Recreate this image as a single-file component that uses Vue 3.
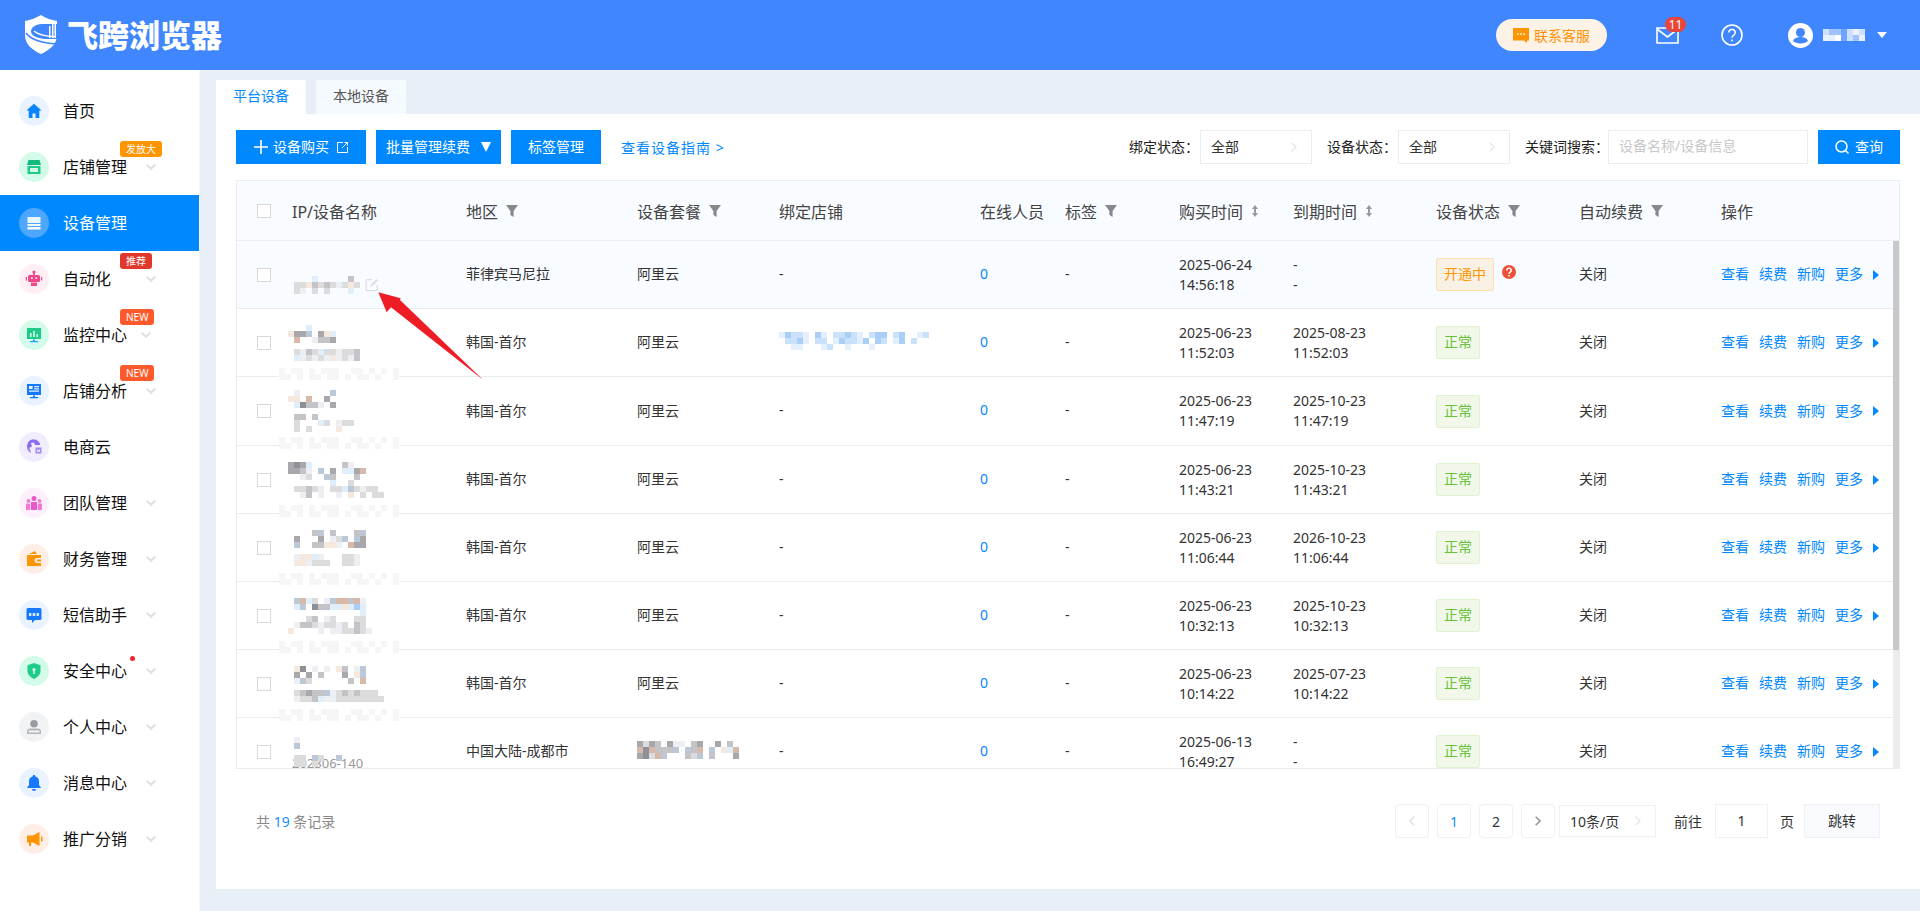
<script setup>
import { h } from 'vue'

// blurred patches in the screenshot: each char is one 6px mosaic cell
const palette = {
  a: '#a8a8ac', b: '#c4c4c8', c: '#dcdcdc', d: '#eeeff2', e: '#e0eefa', f: '#f5e9df',
  g: '#bcc8d8', h: '#8f8f96', p: '#d8b8a8', i: '#a9cff7', j: '#c9e1fb', k: '#e3effd',
  l: '#cfe0ff', m: '#9fc2ff', n: '#e9f1ff', o: '#6ea3ff', s: '#f6f6f7', w: '#ffffff',
}

const Mosaic = ({ rows, bg }) => {
  const cols = Math.max(...rows.map((r) => r.length))
  const cells = []
  if (bg) cells.push(h('rect', { width: cols * 6, height: rows.length * 6, fill: bg }))
  rows.forEach((row, y) => {
    ;[...row].forEach((ch, x) => {
      if (palette[ch]) cells.push(h('rect', { x: x * 6, y: y * 6, width: 6, height: 6, fill: palette[ch] }))
    })
  })
  return h('svg', { width: cols * 6, height: rows.length * 6, style: 'display:block;flex:none' }, cells)
}

const userMosaic = ['lmmolnl.', 'nkwolmn.']
const smudge = ['s.ss.s.sss..ss.s.s.s', 'ss.s.ss.ss.s.ss.s..s']

const menu = [
  { name: '首页', bg: '#e8f3ff', icon: [{ d: 'M10 2.8 2.4 9.6h2.3V17h3.8v-4.6h3V17h3.8V9.6h2.3z', fill: '#0a84ff' }] },
  { name: '店铺管理', bg: '#d2fbe9', arrow: true, badge: '发放大', badgeColor: '#ff9500', icon: [
    { d: 'M4.5 3h11L17 8H3z', fill: '#12b97c' },
    { d: 'M3.5 9h13v8h-13zM6 11v4h8v-4z', fill: '#1ecb8b' },
  ] },
  { name: '设备管理', active: true, bg: '#4da6ff', arrow: false, icon: [
    { d: 'M3.5 4h13v6h-13z', fill: '#eaf4ff' },
    { d: 'M3.5 11h13v2h-13zM3.5 14h13v2.5h-13z', fill: '#ffffff' },
  ] },
  { name: '自动化', bg: '#ffeff5', arrow: true, badge: '推荐', badgeColor: '#e0392b', icon: [
    { d: 'M9.2 3h1.6v3h-1.6z', fill: '#f0478a' },
    { d: 'M10 1.5a1.6 1.6 0 1 1 0 3.2 1.6 1.6 0 0 1 0-3.2z', fill: '#f0478a' },
    { d: 'M5.5 6h9A1.5 1.5 0 0 1 16 7.5v4a1.5 1.5 0 0 1-1.5 1.5h-9A1.5 1.5 0 0 1 4 11.5v-4A1.5 1.5 0 0 1 5.5 6zM7 8.3v1.6h1.6V8.3zM11.4 8.3v1.6H13V8.3z', fill: '#f0478a' },
    { d: 'M1.8 8H3v3.5H1.8zM17 8h1.2v3.5H17zM7 13.5h6V17H7z', fill: '#f0478a' },
  ] },
  { name: '监控中心', bg: '#d2fbe9', arrow: true, arrowLeft: true, badge: 'NEW', badgeColor: '#ff5a2b', icon: [
    { d: 'M3 3h14v11H3zM6 8v4h1.6V8zM9.2 6v6h1.6V6zM12.4 9v3H14V9z', fill: '#1ecb8b' },
    { d: 'M9 14.5h2V16h3v1.2H6V16h3z', fill: '#2aa0ff' },
  ] },
  { name: '店铺分析', bg: '#e8f3ff', arrow: true, badge: 'NEW', badgeColor: '#ff5a2b', icon: [
    { d: 'M3 3h14v11H3zM5 5v3h3.6V5zM10.2 5v1.2H15V5zM10.2 7.2v1.2H15V7.2zM5 9.6v1.2h10V9.6z', fill: '#1677ff' },
    { d: 'M9 14.5h2V16h3v1.2H6V16h3z', fill: '#1677ff' },
  ] },
  { name: '电商云', bg: '#f1edff', icon: [
    { d: 'M9.5 2.5a7 7 0 0 1 6.8 5.6H11l-1-2.6-3.2.4 1.2 3.6-2.5 1.2 1 4.6a7 7 0 0 1 3-13z', fill: '#8b6cf0' },
    { d: 'M3 10a7 7 0 0 0 3.8 6l-.8-4zM11.5 10.5h6v6h-6z', fill: '#a48cf5' },
    { d: 'M13 12.2l1.5 1.2 1.5-1.2v2.6h-3z', fill: '#f1edff' },
  ] },
  { name: '团队管理', bg: '#fdeffb', arrow: true, icon: [
    { d: 'M10 3a2.5 2.5 0 1 1 0 5 2.5 2.5 0 0 1 0-5zM7 9h6v8H7z', fill: '#e85ac8' },
    { d: 'M4.5 6a1.9 1.9 0 1 1 0 3.800 1.900 1.900 0 0 1 0-3.800zM2 10.500h4.200V17H2zM15.500 6a1.900 1.900 0 1 1 0 3.800 1.900 1.900 0 0 1 0-3.800zM13.800 10.500H18V17h-4.200z', fill: '#ee79d6' },
  ] },
  { name: '财务管理', bg: '#ffeee6', arrow: true, icon: [
    { d: 'M5 5l6-3 2 3zM3 6h14v3h-4a2.500 2.500 0 0 0 0 5h4v3H3z', fill: '#ff9500' },
    { d: 'M13 10.500h4v2h-4z', fill: '#ff9500' },
  ] },
  { name: '短信助手', bg: '#e8f3ff', arrow: true, icon: [
    { d: 'M4 3h12a1.500 1.500 0 0 1 1.500 1.500v9A1.500 1.500 0 0 1 16 15h-5l-3 3v-3H4a1.500 1.500 0 0 1-1.500-1.500v-9A1.500 1.500 0 0 1 4 3z', fill: '#1677ff' },
    { d: 'M5 8h2.400v3H5zM8.700 8h2.600v3H8.700zM12.600 8H15v3h-2.400z', fill: '#d8e9ff' },
  ] },
  { name: '安全中心', bg: '#d2fbe9', arrow: true, dot: true, icon: [
    { d: 'M10 2l6.500 2.200V10c0 3.500-2.800 6-6.500 8-3.700-2-6.500-4.500-6.500-8V4.200zM10 7a1.600 1.600 0 0 0-.8 3V13h1.600v-3A1.600 1.600 0 0 0 10 7z', fill: '#1ecb8b' },
  ] },
  { name: '个人中心', bg: '#f2f3f5', arrow: true, icon: [
    { d: 'M10 3a3.800 3.800 0 1 1 0 7.600A3.800 3.800 0 0 1 10 3z', fill: '#9a9ca3' },
    { d: 'M6 11.500h8c1.800 0 3 1.400 3 3V17H3v-2.500c0-1.600 1.200-3 3-3zM5 13.500a1 1 0 0 0-.6 1V15.500h11.200v-1a1 1 0 0 0-.6-1z', fill: '#b3b5bb' },
  ] },
  { name: '消息中心', bg: '#e8f3ff', arrow: true, icon: [
    { d: 'M10 2a1.400 1.400 0 0 1 1.400 1.400 5 5 0 0 1 3.600 4.800V12l1.800 2.400v.6H3.200v-.6L5 12V8.200a5 5 0 0 1 3.600-4.800A1.400 1.400 0 0 1 10 2zM8 16h4a2 2 0 0 1-4 0z', fill: '#1677ff' },
  ] },
  { name: '推广分销', bg: '#ffeee6', arrow: true, icon: [
    { d: 'M15.500 3v14L9 13.500H7V17H5v-3.500H3v-7h6z', fill: '#ff9500' },
    { d: 'M17 7.500h1.500v5H17z', fill: '#ff9500' },
  ] },
]

const heads = [
  { label: 'IP/设备名称' },
  { label: '地区', filter: true },
  { label: '设备套餐', filter: true },
  { label: '绑定店铺' },
  { label: '在线人员' },
  { label: '标签', filter: true },
  { label: '购买时间', sort: true },
  { label: '到期时间', sort: true },
  { label: '设备状态', filter: true },
  { label: '自动续费', filter: true },
  { label: '操作' },
]

const korea = '韩国-首尔'
const rows = [
  { mosaic: ['....e.....b.', '.ccfbcbcdcfc', '.cd.c.c...e.'], first: true, edit: true, region: '菲律宾马尼拉', buy: ['2025-06-24', '14:56:18'], end: ['-', '-'], status: '开通中' },
  { mosaic: ['...e..........', 'faag.afe......', '.p..dbba......', '..............', '.cdbceccdccb..', '.edcdcdfdcdb..'], region: korea, store: ['kijjk.ik.jjijk.jii.ji..kj', '.jjik.jj.kijjki.ij.ki.j', '..kk...kj..k...k.....'], buy: ['2025-06-23', '11:52:03'], end: ['2025-08-23', '11:52:03'] },
  { mosaic: ['.d.....g......', 'ff.p..a.......', '.ehbbd.a......', '..............', '.bb.b.........', '.c...ec.dcc...', '.c.c....f.....'], region: korea, tall: true, buy: ['2025-06-23', '11:47:19'], end: ['2025-10-23', '11:47:19'] },
  { mosaic: ['ahae.....bd.....', 'aabd.g.a.eeap...', '..dc..gb...b....', '.......e..c.....', '.ccbcd.ccegcdcc.', '..db.d..d.f.c.cc'], region: korea, buy: ['2025-06-23', '11:43:21'], end: ['2025-10-23', '11:43:21'] },
  { mosaic: ['....bg.b...bg...', '.a...a.dcg.ga...', '.g..bbffd.paa...', '................', '.dffed...ccd....', '.ffdccc..ccd....'], region: korea, buy: ['2025-06-23', '11:06:44'], end: ['2026-10-23', '11:06:44'] },
  { mosaic: ['.gpec.dgppbpd...', '.eg.hbbeefeie...', '............e...', '...cb.dc...cc...', '.dbbcdccdc.bc...', 'f....d.ddccbcd..'], region: korea, buy: ['2025-06-23', '10:32:13'], end: ['2025-10-23', '10:32:13'] },
  { mosaic: ['.fh.d.d.fb.dg...', '.a.a.b...a.fg...', '.dgc......b.p...', '................', '.cbabbgdcbcbccc.', '.dccbeddcccccccc'], region: korea, buy: ['2025-06-23', '10:14:22'], end: ['2025-07-23', '10:14:22'] },
  { mosaic: ['.d......', '.g......', '........', '.cc.gc..g', '.cc.c...'], last: true, region: '中国大陆-成都市', plan: ['acab.add.ba..a.b.', 'phpbbbg.gbp.g.fep', 'ahcpg...bcg.b...a'], buy: ['2025-06-13', '16:49:27'], end: ['-', '-'] },
]
</script>

<template>
  <div class="page">
    <header class="topbar">
      <div class="brand">
        <svg class="logo" width="34" height="40" viewBox="0 0 34 40">
          <path d="M1 6C7 5 12 3 17 0c4 3 10 5 16 6v14c0 9-7 15-16 19C8 35 1 29 1 20z" fill="#fff" />
          <path d="M34 9H18c-7 0-11 4-11 7 0 5 6 7 13 8h14z" fill="#4086ff" />
          <path d="M25 11h1.500v12H25zM28 8h1.500v15H28zM30.500 8H32v15h-1.500z" fill="#fff" />
          <path d="M10 16c3 3 10 5 22 6" stroke="#fff" stroke-width="1.400" fill="none" />
          <path d="M2 18c5 7 15 10 31 11" stroke="#4086ff" stroke-width="1.500" fill="none" />
        </svg>
        <span class="brand-name">飞跨浏览器</span>
      </div>
      <div class="top-tools">
        <div class="service">
          <svg width="16" height="17" viewBox="0 0 16 17">
            <path d="M0 1h16v12.500h-2V16l-3-2.500H0z" fill="#ff9500" />
            <path d="M4 6.200h1.600v1.600H4zM7.200 6.200h1.600v1.600H7.200zM10.400 6.200H12v1.600h-1.600z" fill="#fff" />
          </svg>
          <span>联系客服</span>
        </div>
        <div class="mail">
          <svg width="23" height="17" viewBox="0 0 23 17" fill="none" stroke="#fff" stroke-width="1.600">
            <path d="M1 1h21v15H1z" />
            <path d="M1 2l10.500 8L22 2" />
          </svg>
          <span class="mail-count">11</span>
        </div>
        <svg class="help" width="22" height="22" viewBox="0 0 22 22" fill="none" stroke="#fff" stroke-width="1.600">
          <circle cx="11" cy="11" r="10" />
          <path d="M7.800 8.500a3.200 3.200 0 1 1 5 2.700c-1.100.7-1.800 1.300-1.800 2.600" />
          <path d="M11 15.500v1.800" />
        </svg>
        <div class="user">
          <svg width="25" height="25" viewBox="0 0 25 25">
            <circle cx="12.500" cy="12.500" r="12.500" fill="#fff" />
            <circle cx="12.500" cy="9.500" r="4.500" fill="#4086ff" />
            <path d="M5 18c1-3 4-4 7.500-4s6.500 1 7.500 4c-1.500 1.500-4 2.500-7.500 2.500S6.500 19.500 5 18z" fill="#4086ff" />
          </svg>
          <Mosaic class="user-blur" :rows="userMosaic" />
          <i class="user-caret"></i>
        </div>
      </div>
    </header>

    <div class="body">
      <aside class="sidebar">
        <div v-for="item in menu" :key="item.name" class="menu-item" :class="{ active: item.active }">
          <span class="menu-icon" :style="{ background: item.bg }">
            <svg width="20" height="20" viewBox="0 0 20 20">
              <path v-for="(p, i) in item.icon" :key="i" :d="p.d" :fill="p.fill" fill-rule="evenodd" />
            </svg>
          </span>
          <span class="menu-name">{{ item.name }}</span>
          <svg v-if="item.arrow" class="menu-arrow" :class="{ left: item.arrowLeft }" width="10" height="6" viewBox="0 0 10 6" fill="none" stroke="#dde0e6" stroke-width="2">
            <path d="M.7.7 5 4.800 9.300.7" />
          </svg>
          <span v-if="item.badge" class="menu-badge" :style="{ background: item.badgeColor }">{{ item.badge }}</span>
          <span v-if="item.dot" class="menu-dot"></span>
        </div>
      </aside>

      <main class="main">
        <div class="tabs">
          <div class="tab current">平台设备</div>
          <div class="tab">本地设备</div>
        </div>

        <section class="panel">
          <div class="toolbar">
            <div class="tool-left">
              <div class="btn buy">
                <svg width="14" height="14" viewBox="0 0 14 14"><path d="M6.200 0h1.600v6.200H14v1.600H7.800V14H6.200V7.800H0V6.200h6.200z" fill="#fff" /></svg>
                <span>设备购买</span>
                <svg width="11" height="11" viewBox="0 0 11 11" fill="none" stroke="#fff"><path d="M6 .5H.5v10h10V5M5 6 10.500.5M7.500.5h3v3" /></svg>
              </div>
              <div class="btn batch">
                <span>批量管理续费</span>
                <i class="batch-caret"></i>
              </div>
              <div class="btn tags"><span>标签管理</span></div>
              <span class="guide">查看设备指南 &gt;</span>
            </div>
            <div class="tool-right">
              <span class="tool-label">绑定状态：</span>
              <div class="select">
                <span>全部</span>
                <svg width="6" height="10" viewBox="0 0 6 10" fill="none" stroke="#e3e6ea" stroke-width="1.400"><path d="M.7.7 5 5 .7 9.300" /></svg>
              </div>
              <span class="tool-label second">设备状态：</span>
              <div class="select">
                <span>全部</span>
                <svg width="6" height="10" viewBox="0 0 6 10" fill="none" stroke="#e3e6ea" stroke-width="1.400"><path d="M.7.7 5 5 .7 9.300" /></svg>
              </div>
              <span class="tool-label third">关键词搜索：</span>
              <div class="search-input">设备名称/设备信息</div>
              <div class="btn query">
                <svg width="14" height="14" viewBox="0 0 14 14" fill="none" stroke="#fff" stroke-width="1.500"><circle cx="6.500" cy="6.500" r="5.500" /><path d="m10.500 10.500 3 3" /></svg>
                <span>查询</span>
              </div>
            </div>
          </div>

          <div class="table">
            <div class="grid head">
              <span class="check-cell"><i class="check"></i></span>
              <span v-for="col in heads" :key="col.label" class="head-cell">
                {{ col.label }}
                <svg v-if="col.filter" class="funnel" width="12" height="12" viewBox="0 0 12 12"><path d="M0 0h12L7.600 6v6L4.400 10V6z" fill="#888" /></svg>
                <svg v-if="col.sort" class="sort" width="8" height="12" viewBox="0 0 8 12"><path d="M4 0l3 4H5v4h2l-3 4-3-4h2V4H1z" fill="#999" /></svg>
              </span>
            </div>
            <div class="table-body">
              <div v-for="(row, idx) in rows" :key="idx" class="grid row" :class="{ first: row.first, tall: row.tall }">
                <span class="check-cell"><i class="check"></i></span>
                <span class="name-cell" :class="{ 'name-first': row.first, 'name-last': row.last }">
                  <Mosaic :rows="row.mosaic" />
                  <svg v-if="row.edit" class="edit" width="14" height="14" viewBox="0 0 14 14" fill="none" stroke="#dcdfe4" stroke-width="1.300">
                    <path d="M7 1.700H2.200a1 1 0 0 0-1 1v9a1 1 0 0 0 1 1h9a1 1 0 0 0 1-1V7" />
                    <path d="M5.500 8.500l.5-2L11.500 1l1.500 1.500L7.500 8z" fill="#dcdfe4" stroke="none" />
                  </svg>
                  <span v-if="row.last" class="name-tail">202306-140</span>
                </span>
                <span class="cell">{{ row.region }}</span>
                <span class="cell">
                  <Mosaic v-if="row.plan" :rows="row.plan" />
                  <template v-else>阿里云</template>
                </span>
                <span class="cell">
                  <Mosaic v-if="row.store" :rows="row.store" />
                  <template v-else>-</template>
                </span>
                <span class="cell online">0</span>
                <span class="cell">-</span>
                <span class="two-line"><b v-for="t in row.buy" :key="t">{{ t }}</b></span>
                <span class="two-line"><b v-for="(t, n) in row.end" :key="n">{{ t }}</b></span>
                <span class="status-cell">
                  <template v-if="row.status">
                    <em class="tag pending">{{ row.status }}</em>
                    <svg class="status-help" width="14" height="14" viewBox="0 0 14 14">
                      <circle cx="7" cy="7" r="7" fill="#ef5038" />
                      <path d="M4.800 5.400a2.200 2.200 0 1 1 3.400 1.800c-.8.500-1.200.9-1.200 1.800" fill="none" stroke="#fff" stroke-width="1.500" />
                      <path d="M6.200 10h1.600v1.600H6.200z" fill="#fff" />
                    </svg>
                  </template>
                  <em v-else class="tag ok">正常</em>
                </span>
                <span class="cell">关闭</span>
                <span class="cell actions">
                  <a>查看</a><a>续费</a><a>新购</a><a>更多</a>
                  <i class="more-caret"></i>
                </span>
                <Mosaic v-if="idx > 0 && idx < 7" class="smudge" :rows="smudge" bg="#ffffff" />
              </div>
            </div>
            <div class="scroll-track"><div class="scroll-thumb"></div></div>
          </div>

          <div class="footer">
            <div class="total">共 <span>19</span> 条记录</div>
            <div class="pager">
              <div class="page-btn">
                <svg width="6" height="10" viewBox="0 0 6 10" fill="none" stroke="#dfe3e8" stroke-width="1.600"><path d="M5.300.7 1 5l4.300 4.300" /></svg>
              </div>
              <div class="page-btn on">1</div>
              <div class="page-btn">2</div>
              <div class="page-btn">
                <svg width="6" height="10" viewBox="0 0 6 10" fill="none" stroke="#999" stroke-width="1.600"><path d="M.7.7 5 5 .7 9.300" /></svg>
              </div>
              <div class="page-size">
                <span>10条/页</span>
                <svg width="6" height="10" viewBox="0 0 6 10" fill="none" stroke="#e3e6ea" stroke-width="1.400"><path d="M.7.7 5 5 .7 9.300" /></svg>
              </div>
              <span class="goto">前往</span>
              <div class="goto-input">1</div>
              <span class="goto-unit">页</span>
              <div class="goto-btn">跳转</div>
            </div>
          </div>
        </section>
      </main>
    </div>

    <svg class="pointer" width="120" height="100" viewBox="0 0 120 100">
      <path d="M8.300 7.300 16.700 27.300 21 22.300 113.300 95 30 15 30.700 13.300z" fill="#ee1c25" />
    </svg>
  </div>
</template>

<style>
html,
body {
  margin: 0;
  background: #e8eff7;
}
</style>

<style scoped>
.page {
  position: relative;
  display: flex;
  flex-direction: column;
  width: 1920px;
  height: 911px;
  overflow: hidden;
  background: #e8eff7;
  color: #333;
  font-family: "Noto Sans", "Noto Sans CJK SC", sans-serif;
  font-size: 14px;
}
.topbar {
  display: flex;
  justify-content: space-between;
  align-items: center;
  flex: none;
  height: 70px;
  padding: 0 33px 0 24px;
  background: #4086ff;
  box-sizing: border-box;
}
.brand {
  display: flex;
  align-items: center;
  gap: 9px;
}
.brand-name {
  color: #fff;
  font-size: 31px;
  font-weight: 900;
  line-height: 40px;
}
.top-tools {
  display: flex;
  align-items: center;
}
.service {
  display: flex;
  align-items: center;
  gap: 5px;
  width: 111px;
  height: 32px;
  margin-right: 49px;
  padding-left: 17px;
  box-sizing: border-box;
  border-radius: 16px;
  background: #fdf2e6;
  color: #ff9000;
  white-space: nowrap;
}
.mail {
  position: relative;
  display: flex;
  margin-right: 42px;
}
.mail-count {
  position: absolute;
  left: 9px;
  top: -10px;
  width: 21px;
  height: 15px;
  border-radius: 8px;
  background: #e8463a;
  color: #fff;
  font-size: 12px;
  line-height: 15px;
  text-align: center;
}
.help {
  margin-right: 45px;
}
.user {
  display: flex;
  align-items: center;
}
.user-blur {
  margin-left: 10px;
}
.user-caret {
  width: 0;
  height: 0;
  margin-left: 6px;
  border-left: 5px solid transparent;
  border-right: 5px solid transparent;
  border-top: 6px solid #fff;
}
.body {
  display: flex;
  flex: 1;
  min-height: 0;
}
.sidebar {
  flex: none;
  width: 200px;
  padding-top: 13px;
  box-sizing: border-box;
  background: #fff;
  border-right: 1px solid #f4f6fa;
}
.menu-item {
  position: relative;
  display: flex;
  align-items: center;
  height: 56px;
  padding-left: 19px;
  color: #111;
  font-size: 16px;
}
.menu-item.active {
  background: #0088ff;
  color: #fff;
}
.menu-icon {
  display: flex;
  justify-content: center;
  align-items: center;
  width: 30px;
  height: 30px;
  border-radius: 50%;
}
.menu-name {
  margin: 0 0 2px 14px;
}
.menu-arrow {
  position: absolute;
  left: 146px;
  top: 25px;
}
.menu-arrow.left {
  left: 141px;
}
.menu-badge {
  position: absolute;
  left: 120px;
  top: 2px;
  height: 16px;
  padding: 0 6px;
  border-radius: 3px;
  color: #fff;
  font-size: 10px;
  line-height: 16px;
}
.menu-dot {
  position: absolute;
  left: 130px;
  top: 13px;
  width: 5px;
  height: 5px;
  border-radius: 50%;
  background: #f5222d;
}
.main {
  display: flex;
  flex-direction: column;
  flex: 1;
  min-width: 0;
  padding: 10px 0 22px 16px;
}
.tabs {
  display: flex;
  gap: 10px;
  flex: none;
}
.tab {
  width: 90px;
  height: 34px;
  background: #f5faff;
  color: #555;
  line-height: 32px;
  text-align: center;
}
.tab.current {
  background: #fff;
  color: #0088ff;
}
.panel {
  flex: 1;
  padding: 16px 20px 0;
  background: #fff;
}
.toolbar {
  display: flex;
  justify-content: space-between;
  align-items: center;
  height: 34px;
}
.tool-left,
.tool-right {
  display: flex;
  align-items: center;
}
.btn {
  display: flex;
  justify-content: center;
  align-items: center;
  height: 34px;
  background: #0088ff;
  color: #fff;
  white-space: nowrap;
}
.btn span {
  margin-bottom: 2px;
}
.buy {
  width: 130px;
  gap: 5px;
}
.buy svg:last-child {
  margin-left: 3px;
}
.batch {
  width: 125px;
  margin-left: 10px;
  gap: 11px;
}
.batch-caret {
  width: 0;
  height: 0;
  border-left: 5px solid transparent;
  border-right: 5px solid transparent;
  border-top: 10px solid #fff;
}
.tags {
  width: 90px;
  margin-left: 10px;
}
.guide {
  margin-left: 20px;
  color: #0088ff;
  letter-spacing: 1px;
}
.tool-label {
  margin-bottom: 2px;
  color: #222;
  white-space: nowrap;
}
.second {
  margin-left: 15px;
}
.third {
  margin-left: 15px;
  margin-right: -1px;
}
.select {
  display: flex;
  justify-content: space-between;
  align-items: center;
  width: 112px;
  height: 34px;
  margin-left: 1px;
  padding: 0 14px 0 10px;
  box-sizing: border-box;
  border: 1px solid #e9ecf0;
}
.select span {
  margin-bottom: 2px;
}
.search-input {
  width: 200px;
  height: 34px;
  padding-left: 10px;
  box-sizing: border-box;
  border: 1px solid #e9ecf0;
  color: #c8c8c8;
  line-height: 30px;
}
.query {
  width: 82px;
  margin-left: 10px;
  gap: 6px;
}
.table {
  position: relative;
  margin-top: 16px;
  border: 1px solid #e9edf2;
  box-sizing: border-box;
  width: 1664px;
  height: 589px;
}
.grid {
  display: grid;
  grid-template-columns: 55px 174px 171px 142px 201px 85px 114px 114px 143px 143px 142px 1fr;
  align-items: center;
}
.head {
  height: 60px;
  box-sizing: border-box;
  background: #f8fbff;
  border-bottom: 1px solid #e9edf2;
  color: #444;
  font-size: 16px;
}
.head-cell {
  display: flex;
  align-items: center;
  white-space: nowrap;
}
.funnel {
  margin-left: 8px;
}
.sort {
  margin-left: 8px;
}
.check-cell {
  display: flex;
  padding-left: 20px;
}
.check {
  display: block;
  width: 14px;
  height: 14px;
  box-sizing: border-box;
  border: 1px solid #d9d9d9;
  background: #fff;
}
.table-body {
  height: 527px;
  overflow: hidden;
}
.row {
  position: relative;
  height: 68px;
  box-sizing: border-box;
  border-bottom: 1px solid #e9edf2;
}
.row.tall {
  height: 69px;
}
.row.first {
  background: #f8fbff;
}
.cell {
  margin-bottom: 3px;
}
.name-cell {
  display: flex;
  align-items: center;
  margin-left: -4px;
}
.name-first {
  padding-top: 20px;
}
.name-last {
  flex-direction: column;
  align-items: flex-start;
  align-self: start;
  padding-top: 19px;
}
.name-last svg {
  position: relative;
  z-index: 1;
}
.name-tail {
  margin: -11px 0 0 4px;
  color: #999;
  font-size: 13px;
  line-height: 14px;
}
.edit {
  margin-left: 5px;
}
.smudge {
  position: absolute;
  left: 42px;
  bottom: -4px;
  z-index: 1;
}
.online {
  color: #0a84ff;
}
.two-line {
  display: flex;
  flex-direction: column;
}
.two-line b {
  font-weight: 400;
  line-height: 20px;
}
.status-cell {
  display: flex;
  align-items: center;
}
.tag {
  height: 33px;
  padding: 0 7px;
  box-sizing: border-box;
  border-radius: 2px;
  font-style: normal;
  line-height: 29px;
}
.pending {
  border: 1px solid #fde0ae;
  background: #f9f1e6;
  color: #ff9500;
}
.ok {
  border: 1px solid #dff3d0;
  background: #f1f8ea;
  color: #67c23a;
}
.status-help {
  margin: -6px 0 0 8px;
}
.actions {
  display: flex;
  align-items: center;
  gap: 10px;
  color: #0088ff;
}
.more-caret {
  width: 0;
  height: 0;
  margin-top: 3px;
  border-top: 5px solid transparent;
  border-bottom: 5px solid transparent;
  border-left: 6px solid #0088ff;
}
.scroll-track {
  position: absolute;
  right: 0;
  top: 60px;
  bottom: 0;
  width: 6px;
  background: #ececec;
}
.scroll-thumb {
  height: 409px;
  background: #c8c8c8;
}
.footer {
  display: flex;
  justify-content: space-between;
  align-items: center;
  height: 34px;
  margin-top: 35px;
  padding: 0 20px;
}
.total {
  color: #888;
}
.total span {
  color: #1890ff;
}
.pager {
  display: flex;
  align-items: center;
}
.page-btn {
  display: flex;
  justify-content: center;
  align-items: center;
  width: 34px;
  height: 34px;
  margin-right: 8px;
  box-sizing: border-box;
  border: 1px solid #edf0f4;
  border-radius: 4px;
}
.page-btn.on {
  color: #1890ff;
}
.page-btn:nth-child(4) {
  margin-right: 4px;
}
.page-size {
  display: flex;
  justify-content: space-between;
  align-items: center;
  width: 97px;
  height: 32px;
  padding: 0 14px 0 10px;
  box-sizing: border-box;
  border: 1px solid #edf0f4;
}
.goto {
  margin: 0 13px 0 18px;
}
.goto-input {
  width: 53px;
  height: 34px;
  box-sizing: border-box;
  border: 1px solid #edf0f4;
  line-height: 32px;
  text-align: center;
}
.goto-unit {
  margin: 0 10px 0 12px;
}
.goto-btn {
  width: 76px;
  height: 34px;
  box-sizing: border-box;
  border: 1px solid #edf0f4;
  background: #f8fafd;
  line-height: 32px;
  text-align: center;
}
.pointer {
  position: absolute;
  left: 370px;
  top: 285px;
}
</style>
